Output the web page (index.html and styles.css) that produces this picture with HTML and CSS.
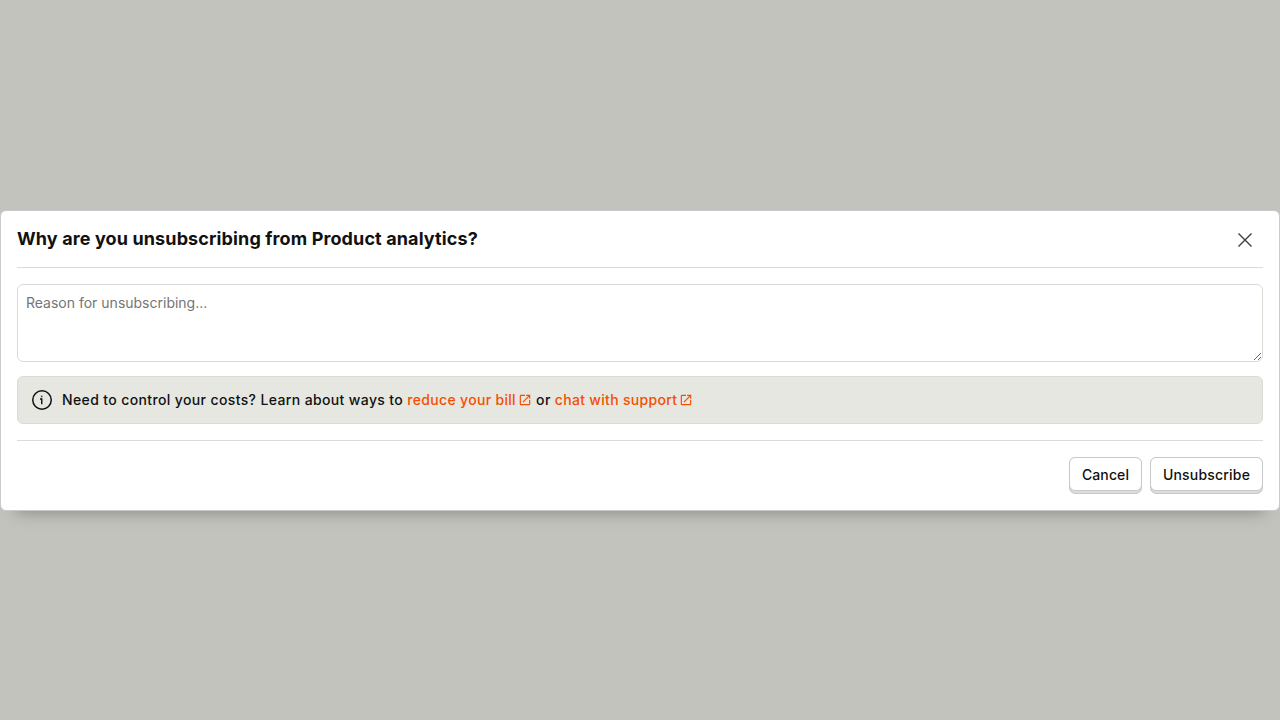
FILE: index.html
```html
<!DOCTYPE html>
<html lang="en">
<head>
<meta charset="utf-8">
<title>Unsubscribe</title>
<link rel="stylesheet" href="styles.css">
</head>
<body>
<div class="overlay">
  <div class="modal" role="dialog" aria-labelledby="modal-title">
    <header class="modal-header">
      <h3 class="modal-title" id="modal-title">Why are you unsubscribing from Product analytics?</h3>
      <button class="close" aria-label="Close">
        <svg viewBox="0 0 24 24" fill="none" stroke="currentColor" stroke-width="1.400"><path d="M5.500 5.500l13 13M18.500 5.500l-13 13"/></svg>
      </button>
    </header>
    <section class="modal-content">
      <textarea class="reason" placeholder="Reason for unsubscribing..."></textarea>
      <div class="banner">
        <svg class="info" viewBox="0 0 24 24" fill="none" stroke="currentColor" stroke-width="1.500"><circle cx="12" cy="12" r="9.250"/><path d="M10 11h1.750v5.200" stroke-width="1.400"/><circle cx="11.700" cy="8.400" r=".9" fill="currentColor" stroke="none" opacity=".75"/></svg>
        <p class="banner-text">Need to control your costs? Learn about ways to <a class="link">reduce your bill<svg class="ext" viewBox="0 0 24 24" fill="currentColor"><path d="M19 19H5V5h7V3H5a2 2 0 0 0-2 2v14a2 2 0 0 0 2 2h14c1.1 0 2-.9 2-2v-7h-2v7zM14 3v2h3.590l-9.830 9.830 1.410 1.410L19 6.410V10h2V3h-7z"/></svg></a> or <a class="link">chat with support<svg class="ext" viewBox="0 0 24 24" fill="currentColor"><path d="M19 19H5V5h7V3H5a2 2 0 0 0-2 2v14a2 2 0 0 0 2 2h14c1.1 0 2-.9 2-2v-7h-2v7zM14 3v2h3.590l-9.830 9.830 1.410 1.410L19 6.410V10h2V3h-7z"/></svg></a></p>
      </div>
    </section>
    <footer class="modal-footer">
      <button class="button cancel"><span class="face">Cancel</span></button>
      <button class="button confirm"><span class="face">Unsubscribe</span></button>
    </footer>
  </div>
</div>
</body>
</html>
```
FILE: styles.css
```css
* { box-sizing: border-box; }
body { margin: 0; font-family: Inter, "Liberation Sans", sans-serif; font-size: 14px; line-height: 20px; color: #111; }
.overlay { display: flex; align-items: center; height: 100vh; background: #c2c3bd; overflow: hidden; }
.modal { width: 100%; height: 301px; background: #fff; border: 1px solid #c9cacc; border-radius: 6px; padding: 0 16px; box-shadow: 0 16px 16px -16px rgba(0,0,0,.35); margin-top: 1px; }
.modal-header { display: flex; justify-content: space-between; height: 57px; padding-top: 14px; border-bottom: 1px solid #dadbdb; }
.modal-title { margin: 0; font-size: 18px; line-height: 28px; font-weight: 700; letter-spacing: .12px; }
.close { display: flex; align-items: center; justify-content: center; width: 36px; height: 30px; padding: 0; border: 0; background: none; color: #3c3d3f; }
.close svg { width: 24px; height: 24px; }
.modal-content { padding: 16px 0; border-bottom: 1px solid #dadbd4; }
.reason { display: block; width: 100%; height: 78px; padding: 8px; border: 1px solid #dadbd4; border-radius: 6px; font: inherit; background: #fff; }
.reason::placeholder { color: #757575; }
.banner { display: flex; align-items: center; gap: 8px; height: 48px; margin-top: 14px; padding: 0 12px; border: 1px solid #dadbd4; border-radius: 6px; background: #e5e7e0; font-weight: 500; letter-spacing: .372px; }
.info { width: 24px; height: 24px; }
.banner-text { margin: 0; }
.link { color: #f54e00; letter-spacing: .320px; }
.ext { width: 14px; height: 14px; margin-left: 2px; vertical-align: -2px; }
.modal-footer { display: flex; justify-content: flex-end; gap: 8px; padding-top: 16px; }
.button { display: flex; height: 37px; padding: 0; border: 0; border-radius: 7px; background: #e0dbdd; box-shadow: inset 0 0 0 1px #cbc8ca; font: inherit; font-weight: 500; color: #111; }
.face { display: flex; align-items: center; justify-content: center; width: 100%; height: 34px; border: 1px solid #c9c9c9; border-radius: 6px; background: #fff; padding-top: 2px; }
.cancel { width: 73px; letter-spacing: .1px; }
.confirm { width: 113px; letter-spacing: .200px; }
```
